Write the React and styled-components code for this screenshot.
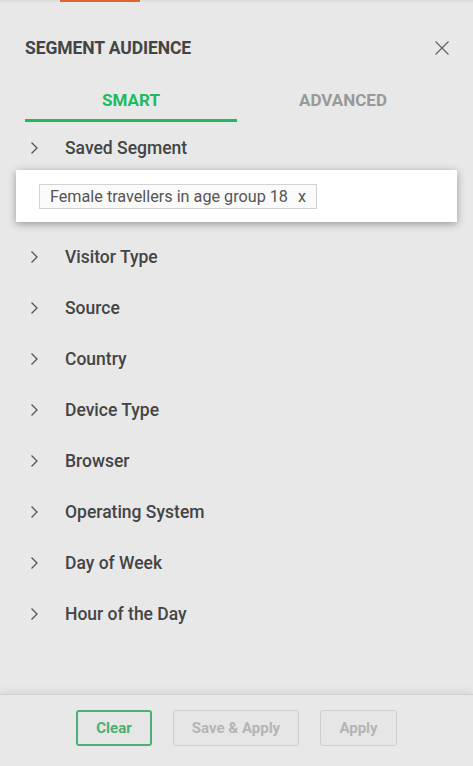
import React from 'react';
import styled, { createGlobalStyle } from 'styled-components';

const GlobalStyle = createGlobalStyle`
  html, body {
    margin: 0;
    padding: 0;
    background: #e8e8e8;
    font-family: Roboto, "Liberation Sans", sans-serif;
  }
`;

const Panel = styled.div`
  width: 473px;
  height: 766px;
  display: flex;
  flex-direction: column;
  background: #e8e8e8;
  overflow: hidden;
`;

const TopStrip = styled.div`
  height: 2px;
  background: #dedede;
  padding-left: 60px;

  & > span {
    display: block;
    width: 80px;
    height: 2px;
    background: #e0652a;
  }
`;

const Header = styled.div`
  display: flex;
  align-items: center;
  justify-content: space-between;
  padding: 35px 22px 0 25px;
  height: 22px;
`;

const Title = styled.h2`
  margin: 0;
  font-size: 17.5px;
  font-weight: 700;
  color: #444;
  letter-spacing: -0.1px;
`;

const CloseButton = styled.button`
  border: 0;
  background: none;
  padding: 0;
  width: 18px;
  height: 18px;
  display: flex;
  align-items: center;
  justify-content: center;
  cursor: pointer;
`;

const Tabs = styled.div`
  display: grid;
  grid-template-columns: 212px 212px;
  margin: 25px 0 0 25px;
`;

const Tab = styled.div`
  height: 38px;
  display: flex;
  align-items: center;
  justify-content: center;
  font-size: 17px;
  font-weight: 700;
  color: ${(p) => (p.active ? '#1dba5f' : '#999')};
  border-bottom: 3px solid ${(p) => (p.active ? '#1dba5f' : 'transparent')};
  box-sizing: border-box;
  padding-bottom: 3px;
`;

const List = styled.div`
  flex: 1;
  display: flex;
  flex-direction: column;
`;

const Row = styled.div`
  height: ${(p) => (p.first ? 48 : 51)}px;
  padding-top: ${(p) => (p.first ? 4 : 0)}px;
  display: flex;
  align-items: center;
  padding-left: 29px;
  gap: 26px;
  font-size: 17.5px;
  font-weight: 500;
  color: #444;
  box-sizing: border-box;
`;

const SavedBox = styled.div`
  margin: 0 16px 9px 16px;
  height: 52px;
  background: #fff;
  box-shadow: 0 2px 8px rgba(0, 0, 0, 0.35);
  display: flex;
  align-items: center;
  padding-left: 23px;
`;

const Chip = styled.span`
  display: inline-flex;
  align-items: center;
  height: 25px;
  padding: 0 10px;
  border: 1px solid #d2d2d2;
  background: #fafafa;
  font-size: 16.2px;
  color: #555;
  box-sizing: border-box;
  gap: 10px;
`;

const Footer = styled.div`
  height: 72px;
  border-top: 1px solid #d0d0d0;
  box-shadow: 0 -4px 6px rgba(0, 0, 0, 0.06);
  display: flex;
  justify-content: center;
  align-items: flex-start;
  padding-top: 15px;
  gap: 21px;
  box-sizing: border-box;
`;

const Button = styled.button`
  width: ${(p) => p.w}px;
  height: 36px;
  padding: 0;
  border-radius: 3px;
  font-family: Roboto, "Liberation Sans", sans-serif;
  font-size: 15px;
  font-weight: 700;
  background: #e6e6e6;
  border: ${(p) => (p.primary ? '2px solid #4caf73' : '1px solid #cfcfcf')};
  color: ${(p) => (p.primary ? '#4caf73' : '#b5b5b5')};
  box-sizing: border-box;
`;

const Chevron = () => (
  <svg width="10" height="14" viewBox="0 0 10 14">
    <path d="M2.5 1.5 L8 7 L2.5 12.5" fill="none" stroke="#555" strokeWidth="1.3" />
  </svg>
);

const items = [
  'Visitor Type',
  'Source',
  'Country',
  'Device Type',
  'Browser',
  'Operating System',
  'Day of Week',
  'Hour of the Day',
];

function App() {
  return (
    <Panel>
      <GlobalStyle />
      <TopStrip>
        <span />
      </TopStrip>
      <Header>
        <Title>SEGMENT AUDIENCE</Title>
        <CloseButton>
          <svg width="16" height="16" viewBox="0 0 16 16">
            <path d="M1.5 1.5 L14.5 14.5 M14.5 1.5 L1.5 14.5" stroke="#666" strokeWidth="1.3" />
          </svg>
        </CloseButton>
      </Header>
      <Tabs>
        <Tab active>SMART</Tab>
        <Tab>ADVANCED</Tab>
      </Tabs>
      <List>
        <Row first>
          <Chevron />
          <span>Saved Segment</span>
        </Row>
        <SavedBox>
          <Chip>
            <span>Female travellers in age group 18</span>
            <span>x</span>
          </Chip>
        </SavedBox>
        {items.map((item) => (
          <Row key={item}>
            <Chevron />
            <span>{item}</span>
          </Row>
        ))}
      </List>
      <Footer>
        <Button primary w={76}>Clear</Button>
        <Button w={126}>Save &amp; Apply</Button>
        <Button w={77}>Apply</Button>
      </Footer>
    </Panel>
  );
}

export default App;
